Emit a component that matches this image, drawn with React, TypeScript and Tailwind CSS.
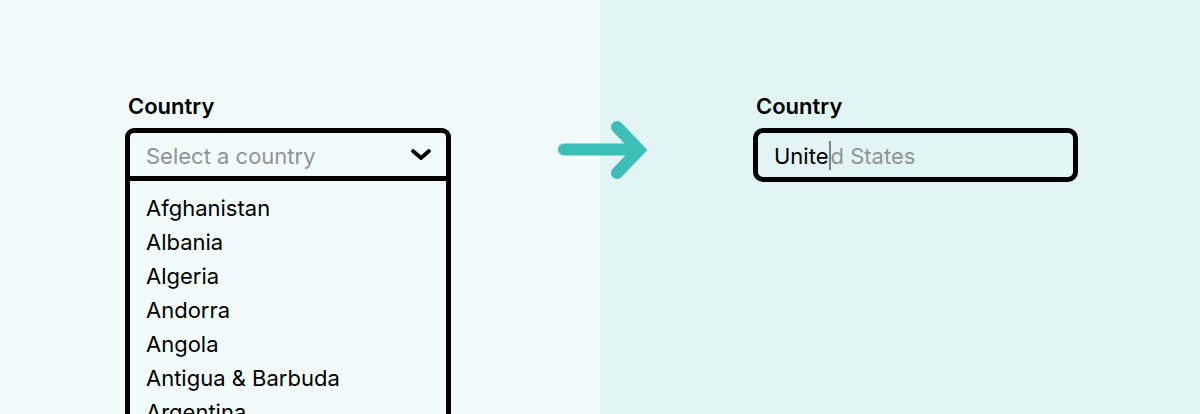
const COUNTRIES = [
  "Afghanistan",
  "Albania",
  "Algeria",
  "Andorra",
  "Angola",
  "Antigua & Barbuda",
  "Argentina",
  "Armenia",
];

const font = { fontFamily: "Inter, 'Noto Sans', sans-serif" };

function Chevron() {
  return (
    <svg width="22" height="14" viewBox="0 0 22 14" fill="none">
      <path d="M3 3 L11 10 L19 3" stroke="#000" strokeWidth="3.8" strokeLinecap="round" strokeLinejoin="round" />
    </svg>
  );
}

function Arrow() {
  return (
    <svg className="absolute left-[550px] top-[115px]" width="100" height="70" viewBox="0 0 100 70" fill="none">
      <path d="M14 34.5 H88" stroke="#3bbfb7" strokeWidth="12" strokeLinecap="round" />
      <path d="M67 12 L89 35 L67 58" stroke="#3bbfb7" strokeWidth="12" strokeLinecap="round" strokeLinejoin="miter" />
    </svg>
  );
}

export default function App() {
  return (
    <div className="relative flex h-[414px] w-[1200px] overflow-hidden text-black" style={font}>
      <div className="h-full w-[600px] bg-[#f1fbfa] pl-[125px] pt-[93px]">
        <p className="pl-[3px] text-[22px] font-semibold leading-[26px]">Country</p>
        <div className="mt-[9px] w-[326px] rounded-t-[9px] border-[5px] border-b-0 border-black">
          <div className="flex h-[48px] items-center justify-between border-b-[5px] border-black pl-[16px] pr-[14px]">
            <span className="mt-[3px] text-[22px] text-[#8f9594]">Select a country</span>
            <Chevron />
          </div>
          <ul className="pt-[10px] pl-[16px] pb-10">
            {COUNTRIES.map((c) => (
              <li key={c} className="h-[34px] text-[22px] leading-[34px]">
                {c}
              </li>
            ))}
          </ul>
        </div>
      </div>
      <div className="h-full w-[600px] bg-[#e2f4f4] pl-[153px] pt-[93px]">
        <p className="pl-[3px] text-[22px] font-semibold leading-[26px]">Country</p>
        <div className="mt-[9px] flex h-[54px] w-[325px] items-center rounded-[10px] border-[5px] border-black pl-[16px]">
          <span className="mt-[3px] text-[22px]">Unite</span>
          <span className="h-[29px] w-[2px] bg-[#7d8484]" />
          <span className="mt-[3px] text-[22px] text-[#8f9594]">d States</span>
        </div>
      </div>
      <Arrow />
    </div>
  );
}
